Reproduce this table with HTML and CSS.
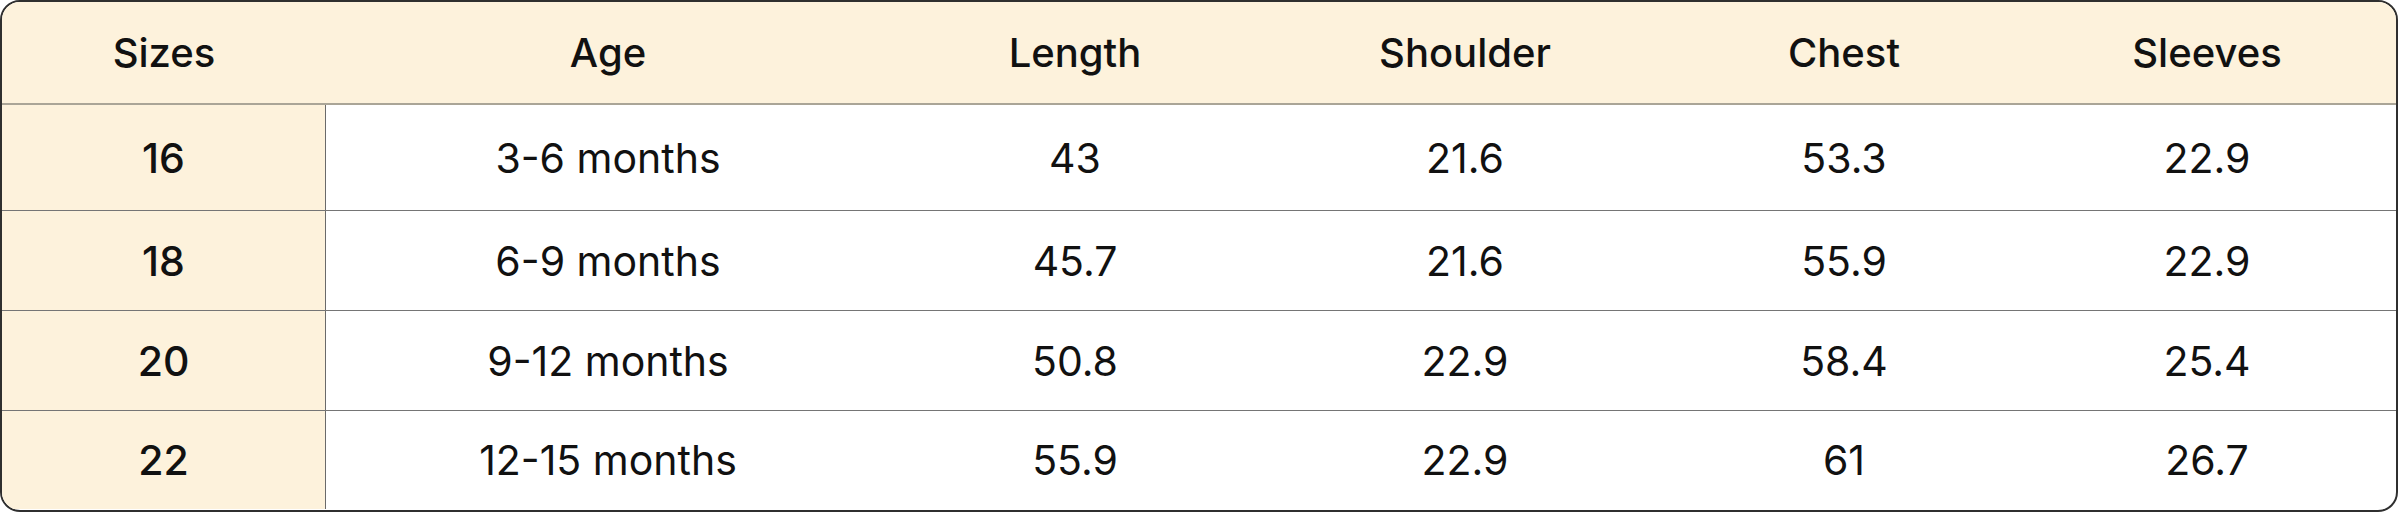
FILE: index.html
```html
<!DOCTYPE html>
<html lang="en">
<head>
<meta charset="utf-8">
<title>Size chart</title>
<link rel="stylesheet" href="styles.css">
</head>
<body>
<div class="chart">
  <div class="row head">
    <div class="cell">Sizes</div>
    <div class="cell">Age</div>
    <div class="cell">Length</div>
    <div class="cell">Shoulder</div>
    <div class="cell">Chest</div>
    <div class="cell">Sleeves</div>
  </div>
  <div class="row r1">
    <div class="cell size">16</div>
    <div class="cell">3-6 months</div>
    <div class="cell">43</div>
    <div class="cell">21.6</div>
    <div class="cell">53.3</div>
    <div class="cell">22.9</div>
  </div>
  <div class="row">
    <div class="cell size">18</div>
    <div class="cell">6-9 months</div>
    <div class="cell">45.7</div>
    <div class="cell">21.6</div>
    <div class="cell">55.9</div>
    <div class="cell">22.9</div>
  </div>
  <div class="row">
    <div class="cell size">20</div>
    <div class="cell">9-12 months</div>
    <div class="cell">50.8</div>
    <div class="cell">22.9</div>
    <div class="cell">58.4</div>
    <div class="cell">25.4</div>
  </div>
  <div class="row last">
    <div class="cell size">22</div>
    <div class="cell">12-15 months</div>
    <div class="cell">55.9</div>
    <div class="cell">22.9</div>
    <div class="cell">61</div>
    <div class="cell">26.7</div>
  </div>
</div>
</body>
</html>
```
FILE: styles.css
```css
* { box-sizing: border-box; }
html, body { margin: 0; padding: 0; background: #ffffff; }
body {
  font-family: Inter, "Noto Sans", "Liberation Sans", sans-serif;
  color: #111111;
}
.chart {
  width: 2398px;
  height: 512px;
  border: 2px solid #2f2f2f;
  border-radius: 20px;
  overflow: hidden;
  background: #ffffff;
}
.row {
  display: grid;
  grid-template-columns: 324px 564px 370px 410px 348px 1fr;
  height: 100px;
  border-bottom: 1px solid #757575;
  font-size: 41px;
  font-weight: 400;
}
.row.head {
  height: 103px;
  background: #fdf2dc;
  border-bottom: 2px solid #aaa597;
  font-size: 40px;
  font-weight: 500;
}
.row.r1 { height: 106px; }
.row.last { border-bottom: none; height: 98px; }
.cell {
  display: flex;
  align-items: center;
  justify-content: center;
}
.cell.size {
  background: #fdf2dc;
  border-right: 1px solid #6a6a6a;
  font-weight: 500;
}
```
